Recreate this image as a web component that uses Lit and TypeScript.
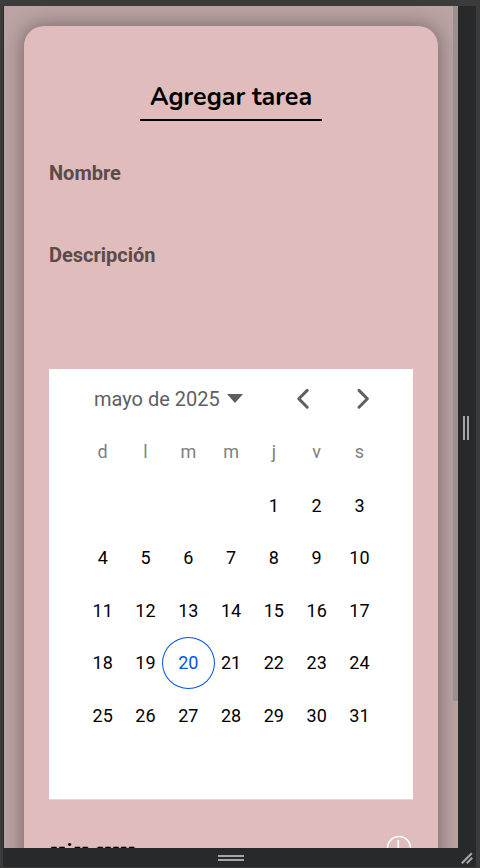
import { LitElement, html, css, svg } from "lit";
import { customElement } from "lit/decorators.js";
import { classMap } from "lit/directives/class-map.js";

@customElement("month-calendar")
class MonthCalendar extends LitElement {
  static styles = css`
    :host { display: block; box-sizing: border-box; width: 364px; height: 431px; background: #fff; border-bottom: 1px solid #d9d9d9; padding: 0 32.3px; font-family: Roboto, sans-serif; }
    .head { display: flex; align-items: center; height: 60px; color: #5f5f5f; font-size: 20px; padding-left: 12.7px; }
    .arrow { width: 16px; height: 9px; margin: 0 0 1px 7px; }
    .nav { width: 15px; height: 22px; }
    .prev { margin-left: 53.2px; }
    .next { margin-left: 45px; }
    .week, .days { display: grid; grid-template-columns: repeat(7, 42.8px); text-align: center; }
    .week { height: 46px; line-height: 46px; color: #808080; font-size: 18px; }
    .days { grid-auto-rows: 52.5px; margin-top: 4px; font-size: 18px; color: #000; justify-items: center; align-items: center; }
    .day { display: flex; align-items: center; justify-content: center; box-sizing: border-box; width: 53px; height: 52px; margin: 0 -6px; }
    .first { grid-column: 5; }
    .today { border: 1px solid #0054e9; border-radius: 50%; color: #0054e9; }
  `;
  render() {
    const chevron = (d: string) => svg`<path d=${d} fill="none" stroke="#5f5f5f" stroke-width="3" stroke-linecap="round" stroke-linejoin="round" />`;
    return html`
      <div class="head">
        <span>mayo de 2025</span>
        <svg class="arrow" viewBox="0 0 16 9"><path d="M0 0H16L8 9Z" fill="#5f5f5f" /></svg>
        <svg class="nav prev" viewBox="0 0 15 22">${chevron("M11.2 2.4L2.8 10.8L11.2 19.2")}</svg>
        <svg class="nav next" viewBox="0 0 15 22">${chevron("M3 2.4L11.4 10.8L3 19.2")}</svg>
      </div>
      <div class="week">${["d", "l", "m", "m", "j", "v", "s"].map((d) => html`<span>${d}</span>`)}</div>
      <div class="days">
        ${Array.from({ length: 31 }, (_, i) => i + 1).map(
          (n) => html`<span class=${classMap({ day: true, first: n === 1, today: n === 20 })}>${n}</span>`
        )}
      </div>
    `;
  }
}

@customElement("app-root")
class AppRoot extends LitElement {
  static styles = css`
    :host { display: block; position: relative; box-sizing: border-box; width: 480px; height: 868px; background: #3b3b3b; padding: 6px 0 0 4px; overflow: hidden; font-family: Roboto, sans-serif; }
    .device { display: grid; grid-template: 842px 19px / 454px 18px; background: #28292b; width: 472px; box-shadow: -1px 0 #28292b; }
    .screen { position: relative; box-sizing: border-box; background: #baa3a2; overflow: hidden; padding: 20px 20px 0; }
    .card { box-sizing: border-box; width: 414px; height: 1000px; border-radius: 20px; background: #e0bcbc; box-shadow: 0 0 20px rgba(0, 0, 0, 0.4); padding: 50px 25px 0; display: flex; flex-direction: column; }
    h1 { align-self: center; box-sizing: border-box; width: 182px; height: 45px; margin: 0; border-bottom: 2px solid #000; text-align: center; font: 700 25px/42px Nunito, Lato, sans-serif; white-space: nowrap; }
    label { font-size: 20px; font-weight: 700; line-height: 24px; color: #5b4b4b; }
    .name { margin-top: 40px; height: 82px; }
    .desc { height: 126px; }
    .time { display: flex; justify-content: space-between; margin-top: 35px; height: 30px; font-size: 20px; font-weight: 700; line-height: 24px; }
    .field { padding: 0 1px; }
    .clock { width: 26px; height: 26px; margin: 0 1px 0 0; }
    .thumb { position: absolute; top: 0; right: 0; width: 5px; height: 695px; background: #9c8f90; }
    .side, .bottom { display: flex; align-items: center; justify-content: center; }
    .side svg { width: 6px; height: 24px; margin: 2px 2px 0 0; }
    .bottom svg { width: 26px; height: 6px; }
    .corner { display: flex; align-items: center; justify-content: center; }
    .corner svg { width: 12px; height: 12px; }
  `;
  render() {
    return html`
      <div class="device">
        <div class="screen">
          <div class="card">
            <h1>Agregar tarea</h1>
            <label class="name">Nombre</label>
            <label class="desc">Descripción</label>
            <month-calendar></month-calendar>
            <div class="time">
              <div><span class="field">--</span>:<span class="field">--</span> <span class="field">-----</span></div>
              <svg class="clock" viewBox="0 0 26 26" fill="none" stroke="#fff" stroke-width="1.6"><circle cx="13" cy="13" r="11.5" /><path d="M12.3 5V14H18" /></svg>
            </div>
          </div>
          <div class="thumb"></div>
        </div>
        <div class="side"><svg viewBox="0 0 6 24"><path d="M1 0V24M5 0V24" stroke="#a5a6a7" stroke-width="2" /></svg></div>
        <div class="bottom"><svg viewBox="0 0 26 6"><path d="M0 1H26M0 5H26" stroke="#a5a6a7" stroke-width="2" /></svg></div>
        <div class="corner"><svg viewBox="0 0 12 12"><path d="M0.8 11.2L10.8 1.2M5.8 11.2L11.2 5.8" stroke="#a5a6a7" stroke-width="2.1" /></svg></div>
      </div>
    `;
  }
}
